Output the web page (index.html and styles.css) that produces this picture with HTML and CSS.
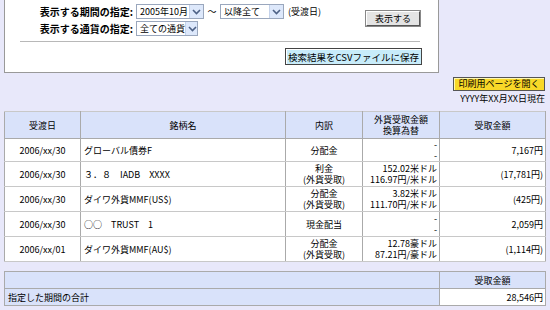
FILE: index.html
```html
<!DOCTYPE html>
<html lang="ja">
<head>
<meta charset="utf-8">
<link rel="stylesheet" href="styles.css">
</head>
<body>
<div class="page">
  <div class="panel">
    <div class="filters">
      <div class="rows">
        <div class="row">
          <span class="label">表示する期間の指定:</span>
          <span class="sel w68"><span class="val">2005年10月</span><span class="arr"><svg width="9" height="6" viewBox="0 0 9 6"><path d="M1 1 L4.5 4.5 L8 1" fill="none" stroke="#4d6185" stroke-width="1.6"/></svg></span></span>
          <span class="tilde">〜</span>
          <span class="sel w64"><span class="val">以降全て</span><span class="arr"><svg width="9" height="6" viewBox="0 0 9 6"><path d="M1 1 L4.5 4.5 L8 1" fill="none" stroke="#4d6185" stroke-width="1.6"/></svg></span></span>
          <span class="note">(受渡日)</span>
        </div>
        <div class="row">
          <span class="label">表示する通貨の指定:</span>
          <span class="sel w62"><span class="val">全ての通貨</span><span class="arr"><svg width="9" height="6" viewBox="0 0 9 6"><path d="M1 1 L4.5 4.5 L8 1" fill="none" stroke="#4d6185" stroke-width="1.6"/></svg></span></span>
        </div>
      </div>
      <button class="btn-show" type="button">表示する</button>
    </div>
    <div class="rule"></div>
    <div class="csv-row"><button class="btn-csv" type="button">検索結果をCSVファイルに保存</button></div>
  </div>

  <div class="print-row"><button class="btn-print" type="button">印刷用ページを開く</button></div>
  <div class="asof">YYYY年XX月XX日現在</div>

  <table class="list">
    <colgroup><col class="c1"><col class="c2"><col class="c3"><col class="c4"><col class="c5"></colgroup>
    <thead>
      <tr class="head"><th>受渡日</th><th>銘柄名</th><th>内訳</th><th>外貨受取金額<br>換算為替</th><th>受取金額</th></tr>
    </thead>
    <tbody>
      <tr class="first"><td class="ctr">2006/xx/30</td><td class="name">グローバル債券F</td><td class="ctr">分配金</td><td class="rt">-<br>-</td><td class="rt">7,167円</td></tr>
      <tr><td class="ctr">2006/xx/30</td><td class="name">３．８　IADB　XXXX</td><td class="ctr">利金<br>(外貨受取)</td><td class="rt">152.02米ドル<br>116.97円/米ドル</td><td class="rt">(17,781円)</td></tr>
      <tr><td class="ctr">2006/xx/30</td><td class="name">ダイワ外貨MMF(US$)</td><td class="ctr">分配金<br>(外貨受取)</td><td class="rt">3.82米ドル<br>111.70円/米ドル</td><td class="rt">(425円)</td></tr>
      <tr><td class="ctr">2006/xx/30</td><td class="name">○○　TRUST　1</td><td class="ctr">現金配当</td><td class="rt">-<br>-</td><td class="rt">2,059円</td></tr>
      <tr><td class="ctr">2006/xx/01</td><td class="name">ダイワ外貨MMF(AU$)</td><td class="ctr">分配金<br>(外貨受取)</td><td class="rt">12.78豪ドル<br>87.21円/豪ドル</td><td class="rt">(1,114円)</td></tr>
    </tbody>
  </table>

  <table class="sum">
    <colgroup><col class="s1"><col class="s2"></colgroup>
    <tr class="shead"><th></th><th>受取金額</th></tr>
    <tr><th class="slabel">指定した期間の合計</th><td class="rt">28,546円</td></tr>
  </table>
</div>
</body>
</html>
```
FILE: styles.css
```css
html, body {
  margin: 0;
  padding: 0;
  background: #e8e8fa;
}
body {
  font-family: "Noto Sans CJK JP", "DejaVu Sans", sans-serif;
  font-size: 9px;
  line-height: 11px;
  color: #000;
  width: 550px;
  height: 310px;
  overflow: hidden;
  white-space: nowrap;
}
.page {
  padding: 0 5px 0 4px;
}
.panel {
  width: 433px;
  height: 72px;
  background: #fff;
  border: 1px solid #999;
  border-top: none;
}
.filters {
  display: flex;
  align-items: flex-start;
  padding-top: 4px;
}
.rows {
  display: flex;
  flex-direction: column;
  gap: 2px;
}
.row {
  display: flex;
  align-items: center;
  height: 15px;
}
.label {
  width: 131px;
  text-align: right;
  font-weight: bold;
  font-size: 10px;
  padding-right: 3px;
  box-sizing: border-box;
}
.sel {
  display: inline-flex;
  align-items: center;
  justify-content: space-between;
  height: 15px;
  box-sizing: border-box;
  border: 1px solid #9aa7bd;
  background: #fff;
  padding-left: 3px;
  overflow: hidden;
}
.val {
  line-height: 13px;
}
.w68 { width: 68px; }
.w64 { width: 64px; }
.w62 { width: 62px; }
.arr {
  display: flex;
  align-items: center;
  justify-content: center;
  flex: none;
  width: 13px;
  height: 13px;
  background: #dde8fb;
  border-left: 1px solid #c4d2ea;
}
.tilde {
  width: 16px;
  text-align: center;
}
.note {
  margin-left: 4px;
}
.btn-show {
  margin-left: auto;
  margin-right: 18px;
  margin-top: 7px;
  width: 54px;
  height: 15px;
  padding: 0;
  font: inherit;
  line-height: 12px;
  background: #e4e4e4;
  border: 1px solid;
  border-color: #fff #555 #555 #fff;
  outline: 1px solid #888;
}
.rule {
  margin: 5px 18px 0 15px;
  border-top: 1px solid #b8b8b8;
}
.csv-row {
  display: flex;
  justify-content: flex-end;
  padding: 6px 16px 0 0;
}
.btn-csv {
  height: 17px;
  width: 137px;
  padding: 0;
  font: inherit;
  font-size: 9.5px;
  line-height: 14px;
  background: #c8ecfa;
  border: 1px solid #444;
  box-shadow: inset 1px 1px 0 #fff;
}
.print-row {
  display: flex;
  justify-content: flex-end;
  padding-top: 4px;
}
.btn-print {
  height: 14px;
  width: 92px;
  padding: 0;
  font: inherit;
  line-height: 12px;
  background: #f8d828;
  border: 1px solid #555;
  box-shadow: inset 1px 1px 0 #fff8b0;
}
.asof {
  text-align: right;
  margin-top: 2px;
  height: 18px;
}
table {
  border-collapse: collapse;
  width: 541px;
  table-layout: fixed;
}
.list {
  border: 1px solid #999;
  background: #fff;
}
.c1 { width: 76px; }
.c2 { width: 205px; }
.c3 { width: 77px; }
.c4 { width: 77px; }
.c5 { width: 106px; }
.list th, .list td {
  border: 1px solid #aaa;
  border-top-color: #c8c8c8;
  border-bottom-color: #c8c8c8;
  padding: 0 3px;
  font-weight: normal;
  line-height: 11px;
  overflow: hidden;
}
.list .head th {
  background: #d9e2fa;
  height: 26px;
  text-align: center;
  border-bottom-color: #aaa;
}
.list td {
  height: 24px;
}
.list .first td {
  height: 22px;
}
.list td.rt {
  padding-right: 2px;
}
.ctr { text-align: center; }
.rt { text-align: right; }
.name { text-align: left; }
.sum {
  margin-top: 9px;
  border: 1px solid #999;
}
.s1 { width: 435px; }
.s2 { width: 106px; }
.sum th, .sum td {
  border: 1px solid #aaa;
  height: 16px;
  padding: 0 3px;
  font-weight: normal;
  line-height: 11px;
}
.sum th { background: #d9e2fa; }
.shead th { text-align: center; }
.sum .slabel { text-align: left; }
.sum td { background: #fff; padding-right: 2px; }
```
